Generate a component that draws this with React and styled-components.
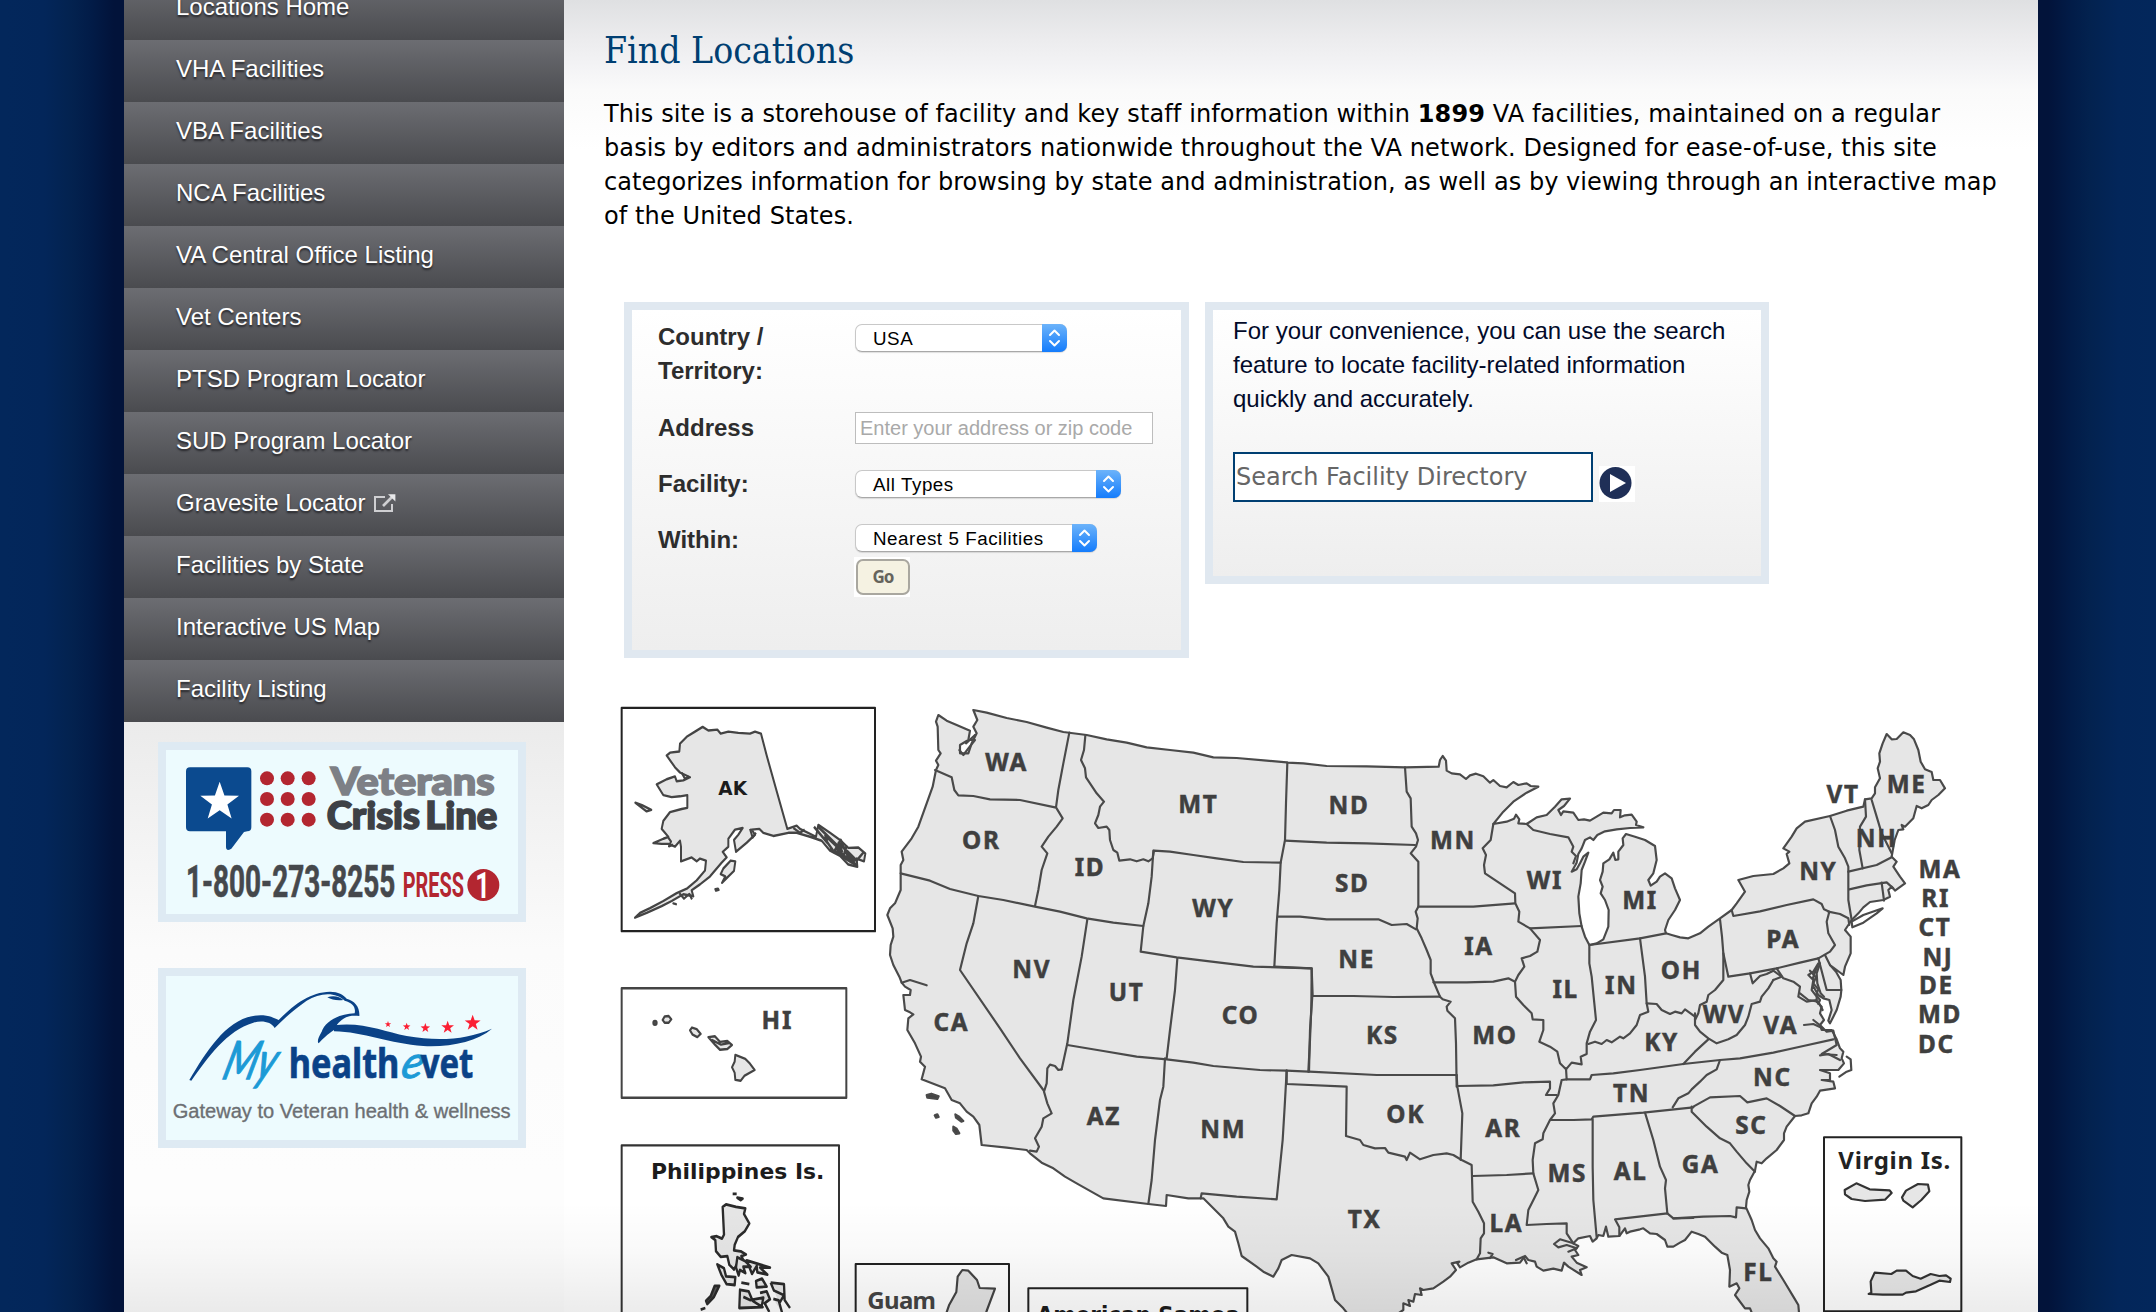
import React from "react";
import styled, { createGlobalStyle } from "styled-components";

const GlobalStyle = createGlobalStyle`
  * { box-sizing: border-box; }
  html, body { margin: 0; padding: 0; overflow: hidden; }
  body { background: #03275b; font-family: "Liberation Sans", Arial, sans-serif; }
`;

const Page = styled.div`
  display: grid;
  grid-template-columns: 124px 440px 1474px 1fr;
  width: 2156px;
  height: 1312px;
  overflow: hidden;
  position: relative;
`;

const Edge = styled.div`
  background: linear-gradient(
    ${(p) => (p.$side === "left" ? "to left" : "to right")},
    #02133a 0, #02133a 10px, #021c48 34px, #03224f 52px, #03265a 80px, #03275b 118px
  );
`;

const BottomShade = styled.div`
  position: absolute;
  left: 124px;
  right: 118px;
  bottom: 0;
  height: 110px;
  pointer-events: none;
  background: linear-gradient(rgba(0, 0, 0, 0), rgba(0, 0, 0, 0.022) 45%, rgba(0, 0, 0, 0.075));
`;

const Sidebar = styled.aside`
  display: flex;
  flex-direction: column;
  background: linear-gradient(#ebebeb 722px, #f4f4f4 850px, #fbfbfb 950px, #fdfdfd 1170px);
`;

const Nav = styled.nav`
  display: flex;
  flex-direction: column;
  margin-top: -22px;
`;

const NavItem = styled.a`
  display: flex;
  align-items: center;
  gap: 8px;
  flex: none;
  height: 62px;
  padding: 0 0 4px 52px;
  color: #fff;
  font-size: 24px;
  letter-spacing: 0;
  text-shadow: 0 2px 2px rgba(20, 20, 24, 0.75);
  background: linear-gradient(#6c6d72, #4a4b4f);
`;

const Banners = styled.div`
  display: flex;
  flex-direction: column;
  gap: 46px;
  padding: 20px 0 0 34px;
`;

const Banner = styled.a`
  display: block;
  width: 368px;
  height: 180px;
  border: 8px solid #deeaf3;
  background: #edfbfe;
  svg { display: block; }
`;

const Main = styled.main`
  display: flex;
  flex-direction: column;
  height: 1312px;
  overflow: hidden;
  background: linear-gradient(#dfe0e2 0, #ececee 40px, #f3f3f5 66px, #fafafa 90px, #fff 150px);
`;

const Title = styled.h1`
  margin: 26px 0 0 40px;
  height: 50px;
  font: 400 37px/50px "DejaVu Serif Condensed", "DejaVu Serif", serif;
  font-stretch: condensed;
  color: #003f72;
`;

const Intro = styled.p`
  margin: 21px 0 0 40px;
  font: 24px/34px "DejaVu Sans", sans-serif;
  color: #000;
  white-space: nowrap;
`;

const IntroLine = styled.span`
  display: block;
  letter-spacing: ${(p) => p.$track}px;
`;

const Panels = styled.div`
  display: flex;
  align-items: flex-start;
  gap: 16px;
  margin: 69px 0 0 60px;
`;

const Panel = styled.section`
  width: ${(p) => p.$width}px;
  height: ${(p) => p.$height}px;
  border: 8px solid #e0e8f0;
  background: linear-gradient(#fff, #fbfbfb 25%, #eee);
  padding: ${(p) => p.$pad};
`;

const Field = styled.div`
  display: grid;
  grid-template-columns: 197px 1fr;
  height: ${(p) => p.$height}px;
`;

const Label = styled.label`
  font-weight: bold;
  font-size: 24px;
  line-height: 34px;
  color: #2d2d2d;
`;

const SelectBox = styled.div`
  display: flex;
  width: ${(p) => p.$width}px;
  height: 28px;
  margin-top: ${(p) => p.$top}px;
  border-radius: 7px;
  background: #fff;
  border: 1px solid #c8c8c8;
  border-bottom-color: #a8a8a8;
  box-shadow: 0 1px 1px rgba(0, 0, 0, 0.12);
`;

const SelectText = styled.span`
  flex: 1;
  padding-left: 17px;
  font-size: 18.8px;
  line-height: 28px;
  letter-spacing: 0.55px;
  color: #000;
  white-space: nowrap;
`;

const Stepper = styled.span`
  display: flex;
  align-items: center;
  justify-content: center;
  width: 25px;
  height: 28px;
  margin: -1px -1px 0 0;
  border-radius: 0 7px 7px 0;
  background: linear-gradient(#6cb3fa, #147cfc);
`;

const AddressInput = styled.div`
  width: 298px;
  height: 32px;
  margin-top: 1px;
  padding-left: 4px;
  border: 1px solid #bdbdbd;
  background: #fff;
  color: #a9a9a9;
  font-size: 20px;
  line-height: 30px;
  white-space: nowrap;
`;

const Stack = styled.div`
  display: flex;
  flex-direction: column;
  align-items: flex-start;
`;

const GoFrame = styled.div`
  display: flex;
  width: 56px;
  height: 40px;
  margin: 5px 0 0 -1px;
  padding: 2px 0 2px 2px;
  background: #fff;
`;

const GoButton = styled.button`
  flex: 1;
  padding: 0;
  border: 2.5px solid #a9a79f;
  border-radius: 7px;
  background: #f5f2e2;
  color: #66645c;
  font: bold 17px/28px "Noto Sans", sans-serif;
  letter-spacing: -1px;
`;

const Help = styled.p`
  margin: 0;
  font-size: 24px;
  line-height: 34px;
  color: #020a2a;
  white-space: nowrap;
`;

const SearchRow = styled.div`
  display: flex;
  align-items: flex-end;
  gap: 6px;
  margin-top: 36px;
`;

const SearchInput = styled.div`
  width: 360px;
  height: 50px;
  padding-left: 1px;
  border: 2px solid #003f72;
  background: #fff;
  color: #666;
  font: 24px/46px "DejaVu Sans", sans-serif;
  white-space: nowrap;
`;

const PlayButton = styled.div`
  width: 36px;
  height: 36px;
  background: #fff;
  svg { display: block; }
`;

const MapArea = styled.div`
  margin: 32px 0 0 36px;
  height: 622px;
  svg { display: block; }
`;

const NAV = [
  "Locations Home", "VHA Facilities", "VBA Facilities", "NCA Facilities",
  "VA Central Office Listing", "Vet Centers", "PTSD Program Locator",
  "SUD Program Locator", "Gravesite Locator", "Facilities by State",
  "Interactive US Map", "Facility Listing",
];

/* ---- map data: each run of points is local to one sheet of the map ---- */
const SHEETS = {
  nw: [780, 0], sw: [780, 870], n: [1980, 120],
  s: [1980, 870], ne: [3000, 30], se: [3120, 870],
};
const run = (sheet, pts) =>
  pts.split(" ").map((p) => {
    const [x, y] = p.split(",").map(Number);
    return `${x + SHEETS[sheet][0]},${y + SHEETS[sheet][1]}`;
  }).join(" ");

const COAST = [
  ["nw", "340,60 380,68 440,84 500,96 560,113 610,126 680,135 740,148 800,158 860,172 930,180 1000,188 1060,202 1130,204 1220,212 1280,217"],
  ["n", "82,98 130,100 200,108 320,109 435,112 536,110 540,90 548,78 558,92 560,122 575,130 600,133 618,147 630,136 648,131 670,139 690,158 700,150 720,168 740,172 760,156 775,165 800,160 812,168 835,170 800,188 760,215 730,245 700,282 740,275 762,266 768,254 778,268 775,280 800,282 830,262 860,255 885,230 905,208 930,206 912,228 895,240 903,255 910,244 940,248 955,270 972,268 990,272 1030,248 1055,250 1062,240 1082,240 1080,262 1095,256 1115,254 1130,275 1128,285 1150,292 1110,294 1070,298 1035,304 1012,315 1000,330 990,322 975,330 965,355 955,372 950,398 935,425 950,418 960,400 970,380 985,368 975,395 965,420 962,460 955,500 958,550 965,590 975,620 988,645 1010,640 1030,628 1045,590 1046,540 1035,510 1022,490 1028,470 1020,450 1028,425 1030,400 1048,388 1060,368 1066,390 1075,388 1075,365 1090,345 1088,325 1098,312 1125,320 1155,330 1185,348 1190,390 1180,430 1165,450 1172,467 1190,455 1200,440 1215,430 1235,445 1245,475 1260,510 1245,540 1225,570 1215,600"],
  ["ne", "198,700 215,705 240,712 265,715 300,700 325,680 360,655 395,630 410,610 435,575 415,540 460,528 520,522 550,505 568,490 560,462 568,455 550,445 575,410 590,385 615,365 690,348 740,332 790,320 795,298 815,295 825,280 825,262 840,235 833,205 840,185 838,160 848,130 860,102 875,118 890,117 910,97 930,105 942,118 955,150 962,185 975,208 995,216 1000,240 1020,240 1035,265 1015,285 995,300 985,315 965,325 950,318 940,355 915,380 905,375 910,388 895,390 884,420 875,470 890,485 880,500 900,530 915,550 885,572 875,560 865,570 870,590 850,600 810,606 790,622 775,640 755,660 745,675 735,690 752,710 752,760 735,800 730,825 690,795 708,815 722,840 724,870 722,890 710,930 700,950 690,970 685,962 695,930 688,900 670,895 655,885 640,860 640,830 655,790 640,815 625,825 640,840 635,870 650,890 650,905 665,920 660,940 672,960 660,975 665,990 695,990"],
  ["se", "575,150 590,178 600,205 610,215 605,235 612,250 595,270 540,270 570,280 570,300 545,300 580,305 585,325 540,332 530,350 515,370 505,400 485,406 465,408 440,440 432,460 432,480 410,510 380,535 365,550 350,545 345,572 330,600 325,615 328,635 320,660 318,682 335,720 345,750 360,775 385,805 400,835 410,845 405,860 430,900 460,950 475,975 478,1010 340,1010 330,985 315,985 285,945 298,925 290,910 268,920 270,870 262,825 245,818 225,800 195,770 175,762 155,755 135,780 120,788 100,800 82,800 75,780 50,762 30,760 10,745"],
  ["s", "1140,748 1110,755 1100,760 1095,745 1078,768 1045,770 1038,740 1030,768 1015,765 1010,775 998,785 990,768 955,775 940,790 955,798 945,810 955,825 935,830 950,848 980,862 960,870 965,885 925,860 912,848 905,872 880,866 850,872 830,860 825,845 805,840 795,828 780,848 740,850 700,832 650,838 625,848 600,862 592,850 598,845 575,850 588,870 570,890 550,905 520,925 490,930 480,925 485,945 465,942 460,965 445,960 450,978 430,970 430,990 400,1010 270,1010 250,985 225,960 205,890 175,850 150,835 95,825 65,840 55,865 40,890 10,875"],
  ["sw", "1190,860 1145,828 1135,790 1125,755 1105,740 1090,715 1060,685 1030,655 1020,655 985,655 920,645 918,678 865,672 730,655 650,610 615,590 580,565 545,548 510,520 500,510 440,503 365,495 358,435 340,410 320,395 300,370 275,360 255,325 185,298 195,260 180,245 183,230 165,190 142,150 145,115 160,103 150,97 135,90 130,45 150,45 152,30 135,20 125,8"],
  ["nw", "118,860 100,825 90,795 92,765 100,740 98,715 82,675 90,655 105,640 122,600 122,550 122,525 130,510 125,485 155,445 175,410 200,340 218,290 228,240 235,225 228,212 242,190 235,180 233,110 228,95 235,75 260,92 290,105 330,122 325,150 300,165 300,190 325,190 335,160 350,130 340,110 352,90 340,60"],
].map(([s, p]) => run(s, p)).join(" ");

const BORDERS = [
  ["nw", "225,240 275,262 283,300 295,316 340,318 390,328 480,330 585,352"],
  ["nw", "628,128 610,220 595,300 588,352 608,385 590,410 565,440 545,470 562,490 545,540 535,600 525,648"],
  ["nw", "122,550 210,572 270,597 355,618 430,630 525,650 600,665 680,685 760,698 850,708"],
  ["nw", "676,137 672,180 663,210 675,235 678,262 710,310 732,335 720,350 715,375 705,400 715,414 740,410 748,420 750,450 760,480 772,488 778,512 810,508 830,514 850,508 865,514 878,505 882,482 930,485 1000,495 1070,505 1150,516 1262,518"],
  ["nw", "1282,218 1278,340 1275,450 1262,518 1258,600 1250,700 1243,830"],
  ["nw", "880,482 875,560 865,640 850,708 842,785 950,802 1080,818 1180,830 1355,835 1354,950 1350,1050 1345,1145"],
  ["nw", "355,618 340,700 320,760 300,840 420,1015 480,1105 550,1200"],
  ["nw", "682,688 665,800 640,930 622,1060 605,1138"],
  ["sw", "605,268 595,270 585,258 570,254 562,265 560,310 552,335 562,370 575,400 550,415 545,440 525,475 537,500 530,515 510,512"],
  ["nw", "952,805 945,900 930,1020 920,1105"],
  ["sw", "622,195 730,213 830,230 920,238 1000,248 1060,258 1200,270 1280,272 1345,275"],
  ["s", "148,275 350,285 590,285"],
  ["sw", "915,235 910,320 900,360 885,480 875,600 865,672"],
  ["sw", "1280,272 1274,380 1268,480 1250,658 1130,650 1025,640 1022,655"],
  ["s", "80,272 80,312 260,320 258,468 300,480 310,495 345,505 375,504 385,518 435,530 440,540 450,518 480,538 520,525 560,520 580,525 605,540 635,555 638,665 655,695 672,730 672,760 662,775 660,820 650,838"],
  ["s", "590,285 592,320 607,400 602,540"],
  ["n", "540,800 548,808 572,815 560,830 562,842 585,865 588,940 590,1070"],
  ["n", "75,332 200,338 320,340 465,345"],
  ["n", "55,560 120,560 200,568 355,568 395,585 440,582 468,598"],
  ["n", "42,710 155,715 158,798 280,798 400,801 540,800"],
  ["n", "157,798 150,900 147,1025"],
  ["n", "435,112 440,185 452,205 455,290 468,310 474,330 468,350 452,370 475,395 475,530 640,530 765,520"],
  ["n", "475,530 467,545 473,565 470,595 485,625 500,660 512,690 512,730 525,765 540,800"],
  ["n", "520,757 620,757 700,755 745,745 765,755"],
  ["n", "700,282 692,330 668,355 678,375 672,405 675,430 720,460 765,490 766,520 778,545 775,575 810,595 965,588"],
  ["n", "800,282 820,300 870,312 925,322 940,350 935,365 948,378 940,400"],
  ["n", "810,595 840,630 832,665 810,678 785,685 793,710 775,735 765,755 768,800 790,825 815,850 818,868 850,870 850,900 838,935 870,950 892,965 900,1000 918,1018 935,998 965,1003 962,980 980,972 980,940 990,905 1008,870 1003,820 995,740 988,700 988,645 1140,625 1218,610"],
  ["n", "985,942 1005,935 1025,942 1040,930 1055,937 1080,920 1090,925 1110,910 1130,885 1140,855 1165,845 1160,820 1155,740 1140,625"],
  ["n", "1160,820 1190,822 1205,840 1230,852 1245,845 1265,850 1275,838 1305,860"],
  ["ne", "360,658 366,710 370,760 370,840 345,870 325,885 320,905 300,915 295,940 285,960"],
  ["se", "165,100 165,135 180,155 205,175 230,190 265,178 290,165 315,135 325,110 335,72 360,65 365,50 385,25 400,0"],
  ["ne", "370,760 385,830 450,820 530,805 600,788 655,775"],
  ["ne", "450,820 458,850 480,828 500,822 520,812 545,830 520,840"],
  ["ne", "530,805 550,835 580,845 600,860 595,890 620,905 650,900"],
  ["ne", "395,630 400,648 480,634 560,615 640,598 665,612 672,628 688,635 680,665 685,700 705,735 690,755 655,775"],
  ["ne", "685,635 720,642 745,655 748,675"],
  ["ne", "690,348 705,390 715,440 735,475 745,500 745,600 755,660"],
  ["ne", "795,298 798,350 780,380 778,450 788,505"],
  ["ne", "815,300 830,350 845,400 860,430 875,460"],
  ["ne", "745,515 830,495 875,472"],
  ["ne", "748,568 800,556 860,547 880,565"],
  ["ne", "845,548 852,602"],
  ["ne", "655,775 680,870 724,870"],
  ["ne", "675,765 690,795"],
  ["ne", "755,665 790,645 848,625 830,640 790,668 757,682 755,665"],
  ["ne", "612,975 640,972 668,985"],
  ["ne", "660,790 650,820 652,850 662,880 672,890"],
  ["ne", "600,880 625,900 655,905 668,930"],
  ["ne", "630,812 648,832 640,850 655,868 648,885 660,900 655,912"],
  ["s", "918,265 920,298 990,298 995,285 1060,280 1140,270 1270,252"],
  ["se", "130,252 240,240 300,235 400,218 490,198 580,178"],
  ["se", "130,252 165,215 205,178"],
  ["s", "920,298 905,300 895,345 880,370 885,400 870,420 850,460 848,478 825,490 818,540 820,580 835,630 825,650 805,690 800,735 860,732 920,730 920,760 940,790"],
  ["s", "592,318 700,316 790,307 870,305 870,325 858,345 890,345"],
  ["s", "872,420 940,420 995,418 1000,410 1150,398 1300,382"],
  ["s", "638,588 740,585 820,580"],
  ["s", "998,418 998,560 1000,660 1010,772"],
  ["s", "1155,398 1180,480 1200,560 1218,600 1215,625 1222,700"],
  ["s", "1078,768 1078,742 1065,718 1222,700 1240,715 1300,714"],
  ["se", "100,715 190,710 270,708 288,712 290,682 318,685"],
  ["se", "240,240 230,268 200,285 180,305 155,328 145,340 115,355 98,382"],
  ["se", "160,380 210,352 300,348 322,367 380,355 420,378 465,408"],
  ["se", "155,380 155,395 200,440 240,475 270,490 290,515 320,550 345,575"],
  ["se", "520,120 545,140 560,155 580,152 590,195 545,222 590,225"],
  ["se", "540,226 565,222 600,240"],
  ["se", "620,230 632,238 634,270 620,275 598,290"],
  ["s", "940,790 900,778 882,792 895,802 920,795 950,805 925,815"],
  ["s", "768,840 790,830 800,850"],
  ["s", "685,818 698,822 690,834"],
  ["sw", "125,8 150,0 200,16"],
  ["nw", "318,160 345,135 330,150 345,150 325,175 310,195 298,180"],
].map(([s, p]) => run(s, p));

const STATES = [
  ["WA", 1218, 218], ["OR", 1142, 453], ["MT", 1793, 343], ["ID", 1468, 533],
  ["WY", 1838, 657], ["NV", 1293, 840], ["UT", 1578, 907], ["CO", 1920, 977],
  ["CA", 1052, 998], ["AZ", 1510, 1280], ["NM", 1868, 1320], ["ND", 2245, 348],
  ["MN", 2557, 453], ["SD", 2255, 580], ["WI", 2833, 572], ["MI", 3118, 632],
  ["NE", 2268, 808], ["IA", 2635, 770], ["IL", 2895, 900], ["IN", 3062, 888],
  ["KS", 2345, 1038], ["MO", 2683, 1038], ["KY", 3183, 1058], ["OH", 3242, 842],
  ["OK", 2415, 1275], ["AR", 2708, 1315], ["TN", 3093, 1210], ["MS", 2900, 1450],
  ["AL", 3090, 1445], ["TX", 2292, 1588], ["LA", 2717, 1602], ["ME", 3918, 283],
  ["VT", 3727, 315], ["NH", 3828, 447], ["NY", 3653, 545], ["PA", 3548, 750],
  ["WV", 3370, 973], ["VA", 3540, 1007], ["MA", 4018, 540], ["RI", 4005, 625],
  ["CT", 4003, 712], ["NJ", 4012, 802], ["DE", 4007, 888], ["MD", 4018, 973],
  ["DC", 4007, 1065], ["NC", 3515, 1163], ["SC", 3452, 1307], ["GA", 3300, 1425],
  ["FL", 3473, 1748], ["HI", 530, 991],
];

const StateLabel = styled.text`
  font: bold 73px "Noto Sans", sans-serif;
  letter-spacing: 5px;
  text-anchor: middle;
  fill: #3f3f3f;
  stroke: #3f3f3f;
  stroke-width: 1.5;
`;

const InsetLabel = styled.text`
  font: bold ${(p) => p.$size || 70}px ${(p) => p.$face || '"DejaVu Sans"'}, sans-serif;
  fill: ${(p) => p.$fill || "#1c1c1c"};
`;

const InsetBox = styled.rect`
  fill: #fff;
  stroke: ${(p) => p.$tone || "#222"};
  stroke-width: 6;
`;

function UsMap() {
  return (
    <svg width="1438" height="622" viewBox="0 0 4314 1866" role="img">
      <g fill="#e6e6e6" stroke="#4a4a4a" strokeWidth="6.5" strokeLinejoin="round" strokeLinecap="round">
        <polygon points={COAST} />
        {BORDERS.map((b, i) => <polyline key={i} points={b} fill="none" />)}
        <g fill="#444">
          <path d="M980 1215l14 -4 22 8 -4 8 -30 -4zM1004 1276l8 -3 4 8 -8 2zM1066 1273l10 6 14 14 -6 2 -16 -12zM1060 1310l10 6 8 14 -10 2 -8 -10z" />
        </g>
      </g>
      <g transform="scale(1 1.19)" strokeLinejoin="round">
        <InsetBox x="65" y="45" width="760" height="563" />
        <InsetBox x="65" y="752" width="674" height="276" $tone="#444" />
        <InsetBox x="65" y="1148" width="652" height="460" $tone="#333" />
        <g fill="#e6e6e6" stroke="#444" strokeWidth="6">
          <path d="M308 93L325 102 352 100 362 110 385 105 415 108 450 110 465 105 483 110 500 165 530 255 562 350 590 342 600 350 648 370 655 340 690 360 720 378 745 398 775 397 796 412 792 432 770 425 772 446 745 440 720 418 690 405 665 380 630 370 590 360 565 360 520 368 490 360 478 350 455 352 465 365 440 385 408 408 402 378 415 365 428 348 405 352 385 375 385 395 368 408 380 422 365 435 330 470 300 490 275 505 280 520 250 515 215 532 185 545 140 562 105 574 120 562 150 550 190 532 230 512 262 500 290 480 315 455 318 430 300 425 290 432 275 422 243 432 243 395 240 380 225 395 205 388 185 388 160 386 190 375 205 370 185 350 190 330 210 308 245 300 262 297 262 265 240 268 215 270 190 265 170 238 200 225 225 218 230 230 250 228 270 220 240 208 225 195 200 165 210 158 238 155 240 135 260 118 285 105z" />
          <path d="M203 370l10 12 -6 12 12 -4M245 208l10 16 12 -6M238 512l14 14 16 -12 8 14M450 350l8 22 10 -12M580 348l20 12 14 -8" fill="none" />
          <path d="M370 450l22 -20 14 2 -4 24 -36 30 10 -16 -14 -6zM106 284l20 6 28 12 -14 4zM346 502l8 -1 2 3 -8 2zM220 538l8 2z" />
          <path d="M642 345l40 40 -6 -18 50 40 -10 -22 50 44 -20 -10 22 22 -36 -18 -22 -22 40 30M655 345l60 50 -40 -34M690 400l40 20 10 -28M740 405l30 25 20 -20M672 372l30 36 20 -30 26 50" fill="none" strokeWidth="7" />
          <circle cx="165" cy="839" r="5" fill="#555" />
          <path d="M188 832l6 -9 12 -1 8 8 -8 9 -12 0zM270 858l6 -7 14 4 12 12 -10 8 -14 -6z" />
          <path d="M325 875l20 -2 15 14 22 -2 14 10 -14 10 -22 2 -14 -12zM335 882l28 12 24 -4" />
          <path d="M406 920l30 10 14 12 14 16 -30 14 -12 13 -16 -2 -2 -18 -8 -14 8 -14z" />
        </g>
        <g fill="#e6e6e6" stroke="#2b2b2b" strokeWidth="7">
          <path d="M398 1270l12 0M412 1280l16 2 -6 4z" />
          <path d="M368 1303l10 -6 30 6 28 4 -4 14 16 24 -14 20 -20 14 -10 20 -2 14 20 2 16 8 -14 4 8 14 -18 2 -12 18 -14 -12 -6 -22 -20 2 -14 -14 -2 -28 -12 -8 16 -2 16 6 6 -10z" />
          <path d="M352 1448l20 10 6 20 28 2 -2 20 -24 -2 -16 -24zM412 1430l24 10 16 14 -22 0 6 16 -16 -8 -4 14 -8 -20zM440 1438l70 18 -30 0 22 18 -30 -6 -2 -16 -14 20zM468 1490l18 -6 14 20 -30 2zM512 1494l40 4 2 40 16 20M512 1494l10 20 30 12 -14 20M424 1494l24 4M420 1512l26 4 12 24 30 16 -70 2zM430 1530l20 8 40 -6 -6 26M480 1520l20 -4 10 20 -16 10 14 22M520 1535l16 4 10 30" />
          <path d="M344 1502l14 0 -16 28 -20 18 -4 -8 14 -12zM302 1562l14 -4" fill="#555" />
        </g>
      </g>
      <g fill="#e6e6e6" stroke="#444" strokeWidth="6.5" strokeLinejoin="round">
        <InsetBox x="767" y="1722" width="460" height="180" />
        <path d="M1032 1890l15 -44 22 -40 4 -46 14 -20 18 2 26 28 8 24 46 2 -24 64 -14 40z" fill="#e3e3e3" />
        <InsetBox x="1285" y="1795" width="657" height="100" />
        <InsetBox x="3672" y="1342" width="412" height="522" />
        <path d="M3734 1500l35 -20 40 18 60 3 6 8 -20 20 -60 4 -40 -6 -20 -14zM3906 1522l12 -20 36 -20 30 2 4 20 -24 26 -26 22 -28 -20z" stroke="#333" />
        <path d="M3806 1812l8 -4 -2 -34 12 -26 50 4 16 -10 28 0 20 16 24 8 30 -14 26 6 20 -2 14 10 -2 10 -32 -4 -26 12 -44 20 -30 4 -10 6 -60 0z" stroke="#333" />
      </g>
      {STATES.map(([name, x, y]) => <StateLabel key={name} x={x + 2} y={y + 25}>{name}</StateLabel>)}
      <InsetLabel $size={56} x="355" y="314" textLength="86" lengthAdjust="spacingAndGlyphs">AK</InsetLabel>
      <InsetLabel $size={66} x="153" y="1467" textLength="520" lengthAdjust="spacingAndGlyphs">Philippines Is.</InsetLabel>
      <InsetLabel $size={72} $face='"Noto Sans"' $fill="#444" x="802" y="1857" textLength="206">Guam</InsetLabel>
      <InsetLabel $size={68} x="1310" y="1898" textLength="610" lengthAdjust="spacingAndGlyphs">American Samoa</InsetLabel>
      <InsetLabel $size={72} $face='"Noto Sans"' $fill="#222" x="3715" y="1436" textLength="336">Virgin Is.</InsetLabel>
    </svg>
  );
}

const LogoText = styled.text`
  font-family: ${(p) => p.$face}, sans-serif;
  font-weight: ${(p) => p.$weight || 400};
  font-style: ${(p) => (p.$italic ? "italic" : "normal")};
  font-size: ${(p) => p.$size}px;
  fill: ${(p) => p.$fill};
  stroke: ${(p) => p.$fill};
  stroke-width: ${(p) => p.$heft || 0};
`;

const star = (cx, cy, r) =>
  Array.from({ length: 10 }, (_, i) => {
    const a = -Math.PI / 2 + (i * Math.PI) / 5;
    const q = i % 2 ? r * 0.4 : r;
    return `${(cx + q * Math.cos(a)).toFixed(1)},${(cy + q * Math.sin(a)).toFixed(1)}`;
  }).join(" ");

function CrisisLine() {
  return (
    <svg width="352" height="164" viewBox="108 90 1056 492">
      <path d="M180 142H352Q364 142 364 154V322Q364 334 352 334L342 336 304 386Q288 396 288 382V334H180Q168 334 168 322V154Q168 142 180 142z" fill="#0b4a8f" />
      <polygon points={star(269, 246, 61)} fill="#fff" />
      {[175, 237, 299].map((y) => [411, 473, 536].map((x) => <circle key={x + "-" + y} cx={x} cy={y} r="21" fill="#b32630" />))}
      <LogoText $face="Lato" $weight={900} $size={112} $heft={5} $fill="#7d8086" x="602" y="225" textLength="492" lengthAdjust="spacingAndGlyphs">Veterans</LogoText>
      <LogoText $face="Lato" $weight={900} $size={112} $heft={5} $fill="#3e4146" x="590" y="327" textLength="280" lengthAdjust="spacingAndGlyphs">Crisis</LogoText>
      <LogoText $face="Lato" $weight={900} $size={112} $heft={5} $fill="#3e4146" x="886" y="327" textLength="216" lengthAdjust="spacingAndGlyphs">Line</LogoText>
      <LogoText $face="Roboto" $weight={700} $size={132} $heft={2} $fill="#45484c" x="168" y="532" textLength="628" lengthAdjust="spacingAndGlyphs">1-800-273-8255</LogoText>
      <LogoText $face="Roboto" $weight={700} $size={106} $fill="#b32630" x="818" y="532" textLength="184" lengthAdjust="spacingAndGlyphs">PRESS</LogoText>
      <circle cx="1060" cy="495" r="48" fill="#b32630" />
      <LogoText $face="Roboto" $weight={700} $size={110} $fill="#fff" x="1036" y="534" textLength="44" lengthAdjust="spacingAndGlyphs">1</LogoText>
    </svg>
  );
}

function HealtheVet() {
  return (
    <svg width="352" height="164" viewBox="108 768 1056 492">
      <g fill="#0a4287">
        <path d="M178 1080C235 985 300 880 400 886C420 888 436 895 446 900C490 855 540 816 600 815C625 815 640 824 650 836C675 842 690 862 688 888C665 886 650 888 635 900C620 912 618 920 612 930C590 945 580 955 566 970C560 965 566 950 575 935C585 905 625 882 674 880C678 862 668 848 644 842C620 816 570 816 530 842C490 870 462 896 434 924C424 905 395 900 370 908C290 932 235 1010 184 1082z" />
        <path d="M592 832C610 825 630 830 640 840C622 842 605 840 592 832z" />
        <path d="M612 916C700 905 760 935 830 948C930 965 1010 958 1086 926C1040 965 960 982 880 978C780 972 700 935 612 934z" />
      </g>
      <g fill="#fb1f33">
        <polygon points={star(774, 913, 10)} /><polygon points={star(830, 920, 12)} />
        <polygon points={star(886, 924, 15)} /><polygon points={star(953, 922, 20)} />
        <polygon points={star(1028, 909, 25)} />
      </g>
      <LogoText $face="Lato" $italic $size={158} $heft={4} $fill="#1c9ad6" transform="translate(272 1076) skewX(-16)" textLength="155" lengthAdjust="spacingAndGlyphs">My</LogoText>
      <LogoText $face='"Noto Sans"' $weight={700} $size={126} $heft={2} $fill="#0a4287" x="476" y="1073" textLength="332" lengthAdjust="spacingAndGlyphs">health</LogoText>
      <LogoText $face="Lato" $italic $size={136} $heft={3} $fill="#1c9ad6" transform="translate(808 1074) skewX(-14)">e</LogoText>
      <LogoText $face='"Noto Sans"' $weight={700} $size={126} $heft={2} $fill="#0a4287" x="872" y="1073" textLength="158" lengthAdjust="spacingAndGlyphs">vet</LogoText>
      <LogoText $face='"Liberation Sans"' $size={58} $heft={1} $fill="#6c6f73" x="128" y="1193" textLength="1014" lengthAdjust="spacingAndGlyphs">Gateway to Veteran health &amp; wellness</LogoText>
    </svg>
  );
}

function ExternalIcon() {
  return (
    <svg width="24" height="20" viewBox="0 0 24 20" fill="none" stroke="#cfcfd2" strokeWidth="2">
      <path d="M12 4H2V18H19V11" />
      <path d="M10 13L20 3" strokeWidth="2.6" />
      <path d="M15 1.2H22.4V8.6z" fill="#e8e8ea" stroke="none" />
    </svg>
  );
}

function Select({ width, top = 0, children }) {
  return (
    <SelectBox $width={width} $top={top}>
      <SelectText>{children}</SelectText>
      <Stepper>
        <svg width="13" height="18" viewBox="0 0 13 18" fill="none" stroke="#fff" strokeWidth="2" strokeLinecap="round" strokeLinejoin="round">
          <path d="M2 6L6.5 1.5L11 6M2 12L6.5 16.5L11 12" />
        </svg>
      </Stepper>
    </SelectBox>
  );
}

export default function App() {
  return (
    <>
      <GlobalStyle />
      <Page>
        <Edge $side="left" />
        <Sidebar>
          <Nav>
            {NAV.map((n) => (
              <NavItem key={n}>{n}{n === "Gravesite Locator" && <ExternalIcon />}</NavItem>
            ))}
          </Nav>
          <Banners>
            <Banner><CrisisLine /></Banner>
            <Banner><HealtheVet /></Banner>
          </Banners>
        </Sidebar>
        <Main>
          <Title>Find Locations</Title>
          <Intro>
            <IntroLine $track={0.11}>This site is a storehouse of facility and key staff information within <b>1899</b> VA facilities, maintained on a regular</IntroLine>
            <IntroLine $track={0.1}>basis by editors and administrators nationwide throughout the VA network. Designed for ease-of-use, this site</IntroLine>
            <IntroLine $track={0.04}>categorizes information for browsing by state and administration, as well as by viewing through an interactive map</IntroLine>
            <IntroLine $track={0.1}>of the United States.</IntroLine>
          </Intro>
          <Panels>
            <Panel $width={565} $height={356} $pad="10px 0 0 26px">
              <Field $height={91}>
                <Label>Country /<br />Territory:</Label>
                <Select width={212} top={4}>USA</Select>
              </Field>
              <Field $height={56}>
                <Label>Address</Label>
                <AddressInput>Enter your address or zip code</AddressInput>
              </Field>
              <Field $height={56}>
                <Label>Facility:</Label>
                <Select width={266} top={3}>All Types</Select>
              </Field>
              <Field $height={80}>
                <Label>Within:</Label>
                <Stack>
                  <Select width={242} top={1}>Nearest 5 Facilities</Select>
                  <GoFrame><GoButton>Go</GoButton></GoFrame>
                </Stack>
              </Field>
            </Panel>
            <Panel $width={564} $height={282} $pad="4px 0 0 20px">
              <Help>
                For your convenience, you can use the search<br />
                feature to locate facility-related information<br />
                quickly and accurately.
              </Help>
              <SearchRow>
                <SearchInput>Search Facility Directory</SearchInput>
                <PlayButton>
                  <svg width="36" height="36" viewBox="0 0 36 36">
                    <circle cx="16.5" cy="17" r="16" fill="#1f2f57" />
                    <path d="M11 8L27 17L11 26z" fill="#fff" />
                  </svg>
                </PlayButton>
              </SearchRow>
            </Panel>
          </Panels>
          <MapArea><UsMap /></MapArea>
        </Main>
        <Edge $side="right" />
        <BottomShade />
      </Page>
    </>
  );
}
